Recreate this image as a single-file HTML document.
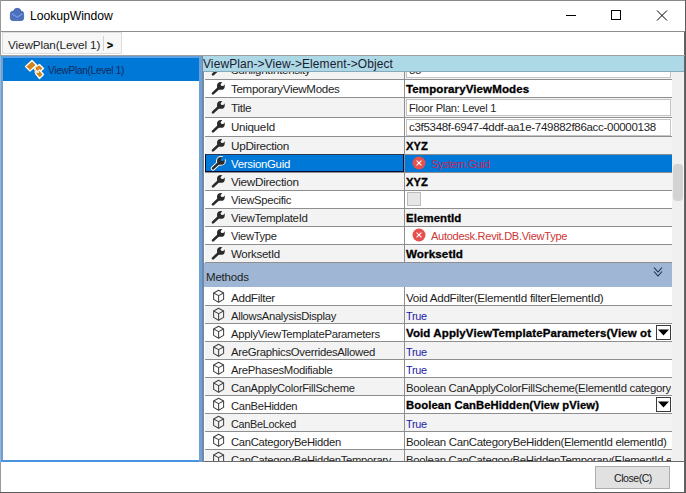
<!DOCTYPE html><html><head><meta charset="utf-8"><title>LookupWindow</title><style>
*{box-sizing:border-box}
html,body{margin:0;padding:0;width:686px;height:493px;overflow:hidden;background:#fff;font-family:"Liberation Sans", sans-serif}
.a{position:absolute}
.t{position:absolute;white-space:nowrap;font-size:11.5px;letter-spacing:-0.3px;color:#1e1e1e;line-height:17px}
.t>span{display:inline-block;transform-origin:0 0}
.b{font-weight:bold;color:#000;font-size:11px;letter-spacing:0.1px;-webkit-text-stroke:0.3px #000}
.ic{position:absolute}
</style></head><body>
<div class="a" style="left:0;top:0;width:686px;height:1px;background:#8a8a8a"></div>
<div class="a" style="left:0;top:0;width:1px;height:493px;background:#9a9a9a"></div>
<div class="a" style="left:685px;top:0;width:1px;height:493px;background:#5a5a5a"></div>
<div class="a" style="left:684px;top:31px;width:1px;height:462px;background:#62666b"></div>
<div class="a" style="left:0;top:492px;width:686px;height:1px;background:#5a5a5a"></div>
<svg class="a" style="left:6px;top:4px" width="22" height="22" viewBox="0 0 22 22"><g fill="#4d70bd" stroke="#3d5ea6" stroke-width="0.8"><circle cx="11.3" cy="8" r="3.7"/><rect x="4.4" y="7.2" width="13.2" height="9.4" rx="2.6"/></g><circle cx="11.3" cy="8" r="3.2" fill="#4d70bd"/><path d="M6 9.6 L11.3 13.2 L16.6 9.6" stroke="#6f98e4" stroke-width="1.3" fill="none"/></svg>
<div class="t " style="left:30px;top:8px;font-size:12.2px;letter-spacing:-0.05px;color:#000"><span>LookupWindow</span></div>
<div class="a" style="left:566px;top:15px;width:10px;height:1px;background:#000"></div>
<div class="a" style="left:611px;top:10px;width:10px;height:10px;border:1px solid #000"></div>
<svg class="a" style="left:656px;top:10px" width="12" height="11" viewBox="0 0 12 11"><path d="M1 0.5 L11 10.5 M11 0.5 L1 10.5" stroke="#000" stroke-width="1"/></svg>
<div class="a" style="left:1px;top:31px;width:684px;height:1px;background:#8e8e8e"></div>
<div class="a" style="left:2px;top:32px;width:120px;height:22px;background:#f7f7f7;border:1px solid #dedede"></div>
<div class="t " style="left:8px;top:36px;font-size:11.7px;letter-spacing:-0.1px"><span>ViewPlan(Level 1)</span></div>
<div class="a" style="left:103px;top:36px;width:1px;height:15px;background:#d0d0d0"></div>
<div class="t b" style="left:107px;top:37px;font-size:10.5px;letter-spacing:0"><span>&gt;</span></div>
<div class="a" style="left:1px;top:55px;width:684px;height:1px;background:#a0a0a0"></div>
<div class="a" style="left:0px;top:56px;width:1px;height:406px;background:#88bbe0"></div>
<div class="a" style="left:1px;top:56px;width:2px;height:406px;background:#789dcb"></div>
<div class="a" style="left:1px;top:56px;width:198px;height:2px;background:#5ea0e2"></div>
<div class="a" style="left:1px;top:460px;width:203px;height:2px;background:#4a93de"></div>
<div class="a" style="left:3px;top:58px;width:196px;height:23px;background:#0078d7"></div>
<svg class="a" style="left:23px;top:58px" width="22" height="22" viewBox="0 0 22 22"><g stroke="#fff" stroke-width="1.3" fill="#d4841c" stroke-linejoin="round"><path d="M2.5 8.5 L9 2.5 L13.5 7 L7 13 Z"/><path d="M10.5 10 L16.5 6.5 L20.5 10.5 L15.5 15 Z"/><path d="M12.5 15.5 L16.5 12 L20.5 16.5 L16.5 20.5 Z"/></g><path d="M12.3 10 L12.3 14.3 L16 14.3" stroke="#f8e2b8" stroke-width="1.4" fill="none"/></svg>
<div class="t " style="left:48px;top:62px;font-size:10px;letter-spacing:-0.25px;color:#15295a"><span>ViewPlan(Level 1)</span></div>
<div class="a" style="left:199px;top:56px;width:3px;height:406px;background:#6fa0d2"></div>
<div class="a" style="left:202px;top:56px;width:2px;height:406px;background:#7089a8"></div>
<div class="a" style="left:0;top:0;width:686px;height:461px;overflow:hidden"><div class="a" style="left:204px;top:71px;width:1px;height:192px;background:#fff"></div><div class="a" style="left:204px;top:287px;width:1px;height:175px;background:#fff"></div><div class="a" style="left:205px;top:60px;width:467px;height:19px;background:#f3f3f3"></div><div class="a" style="left:205px;top:79px;width:467px;height:1px;background:#8e8e8e"></div><div class="a" style="left:210px;top:61px;width:16px;height:16px"><svg class="ic" width="16" height="16" viewBox="0 0 16 16"><path d="M3.0 13.4 L9.0 7.8" stroke="#2a2a2a" stroke-width="2.6" stroke-linecap="round"/><circle cx="10.9" cy="5.9" r="3.9" fill="#2a2a2a"/><circle cx="12.3" cy="4.5" r="1.6" fill="#f3f3f3"/><path d="M12.3 2.9 L16 2.9 L16 6.1 L12.3 6.1 Z" transform="rotate(-45 12.3 4.5)" fill="#f3f3f3"/></svg></div><div class="t " style="left:231px;top:62px;color:#1e1e1e"><span>SunlightIntensity</span></div><div class="a" style="left:406px;top:61px;width:265px;height:17px;background:#fff;border:1px solid #c4c4c4"></div><div class="t " style="left:409px;top:62px;"><span>85</span></div><div class="a" style="left:205px;top:80px;width:467px;height:17px;background:#ffffff"></div><div class="a" style="left:205px;top:97px;width:467px;height:1px;background:#8e8e8e"></div><div class="a" style="left:210px;top:80px;width:16px;height:16px"><svg class="ic" width="16" height="16" viewBox="0 0 16 16"><path d="M3.0 13.4 L9.0 7.8" stroke="#2a2a2a" stroke-width="2.6" stroke-linecap="round"/><circle cx="10.9" cy="5.9" r="3.9" fill="#2a2a2a"/><circle cx="12.3" cy="4.5" r="1.6" fill="#ffffff"/><path d="M12.3 2.9 L16 2.9 L16 6.1 L12.3 6.1 Z" transform="rotate(-45 12.3 4.5)" fill="#ffffff"/></svg></div><div class="t " style="left:231px;top:81px;color:#1e1e1e"><span style="transform:scaleX(1.0028)">TemporaryViewModes</span></div><div class="t b" style="left:406px;top:81px;"><span style="transform:scaleX(1.0483)">TemporaryViewModes</span></div><div class="a" style="left:205px;top:98px;width:467px;height:19px;background:#f3f3f3"></div><div class="a" style="left:205px;top:117px;width:467px;height:1px;background:#8e8e8e"></div><div class="a" style="left:210px;top:99px;width:16px;height:16px"><svg class="ic" width="16" height="16" viewBox="0 0 16 16"><path d="M3.0 13.4 L9.0 7.8" stroke="#2a2a2a" stroke-width="2.6" stroke-linecap="round"/><circle cx="10.9" cy="5.9" r="3.9" fill="#2a2a2a"/><circle cx="12.3" cy="4.5" r="1.6" fill="#f3f3f3"/><path d="M12.3 2.9 L16 2.9 L16 6.1 L12.3 6.1 Z" transform="rotate(-45 12.3 4.5)" fill="#f3f3f3"/></svg></div><div class="t " style="left:231px;top:100px;color:#1e1e1e"><span style="transform:scaleX(1.0211)">Title</span></div><div class="a" style="left:406px;top:99px;width:265px;height:17px;background:#fff;border:1px solid #c4c4c4"></div><div class="t " style="left:409px;top:100px;"><span style="transform:scaleX(0.9659)">Floor Plan: Level 1</span></div><div class="a" style="left:205px;top:118px;width:467px;height:18px;background:#ffffff"></div><div class="a" style="left:205px;top:136px;width:467px;height:1px;background:#8e8e8e"></div><div class="a" style="left:210px;top:118px;width:16px;height:16px"><svg class="ic" width="16" height="16" viewBox="0 0 16 16"><path d="M3.0 13.4 L9.0 7.8" stroke="#2a2a2a" stroke-width="2.6" stroke-linecap="round"/><circle cx="10.9" cy="5.9" r="3.9" fill="#2a2a2a"/><circle cx="12.3" cy="4.5" r="1.6" fill="#ffffff"/><path d="M12.3 2.9 L16 2.9 L16 6.1 L12.3 6.1 Z" transform="rotate(-45 12.3 4.5)" fill="#ffffff"/></svg></div><div class="t " style="left:231px;top:119px;color:#1e1e1e"><span style="transform:scaleX(1.0071)">UniqueId</span></div><div class="a" style="left:406px;top:119px;width:265px;height:17px;background:#fff;border:1px solid #c4c4c4"></div><div class="t " style="left:409px;top:119px;"><span style="transform:scaleX(1.0004)">c3f5348f-6947-4ddf-aa1e-749882f86acc-00000138</span></div><div class="a" style="left:205px;top:137px;width:467px;height:17px;background:#f3f3f3"></div><div class="a" style="left:205px;top:154px;width:467px;height:1px;background:#8e8e8e"></div><div class="a" style="left:210px;top:137px;width:16px;height:16px"><svg class="ic" width="16" height="16" viewBox="0 0 16 16"><path d="M3.0 13.4 L9.0 7.8" stroke="#2a2a2a" stroke-width="2.6" stroke-linecap="round"/><circle cx="10.9" cy="5.9" r="3.9" fill="#2a2a2a"/><circle cx="12.3" cy="4.5" r="1.6" fill="#f3f3f3"/><path d="M12.3 2.9 L16 2.9 L16 6.1 L12.3 6.1 Z" transform="rotate(-45 12.3 4.5)" fill="#f3f3f3"/></svg></div><div class="t " style="left:231px;top:138px;color:#1e1e1e"><span style="transform:scaleX(1.0218)">UpDirection</span></div><div class="t b" style="left:406px;top:138px;"><span style="transform:scaleX(1.0143)">XYZ</span></div><div class="a" style="left:205px;top:155px;width:467px;height:17px;background:#0078d7"></div><div class="a" style="left:205px;top:172px;width:467px;height:1px;background:#8e8e8e"></div><div class="a" style="left:210px;top:155px;width:16px;height:16px"><svg class="ic" width="16" height="16" viewBox="0 0 16 16"><path d="M3.0 13.4 L9.0 7.8" stroke="#fff" stroke-width="4.4" stroke-linecap="round"/><circle cx="10.9" cy="5.9" r="4.9" fill="#fff"/><path d="M3.0 13.4 L9.0 7.8" stroke="#2a2a2a" stroke-width="2.6" stroke-linecap="round"/><circle cx="10.9" cy="5.9" r="3.9" fill="#2a2a2a"/><circle cx="12.3" cy="4.5" r="1.6" fill="#0078d7"/><path d="M12.3 2.9 L16 2.9 L16 6.1 L12.3 6.1 Z" transform="rotate(-45 12.3 4.5)" fill="#0078d7"/></svg></div><div class="t " style="left:231px;top:156px;color:#fff"><span style="transform:scaleX(0.9931)">VersionGuid</span></div><svg width="14" height="14" viewBox="0 0 14 14" style="position:absolute;left:412px;top:156px"><circle cx="7" cy="7" r="6.5" fill="#e8504f"/><path d="M4.6 4.6 L9.4 9.4 M9.4 4.6 L4.6 9.4" stroke="#fff" stroke-width="1.1"/></svg><div class="t " style="left:431px;top:156px;color:#c0285c"><span style="transform:scaleX(0.9387)">System.Guid</span></div><div class="a" style="left:205px;top:173px;width:467px;height:17px;background:#f3f3f3"></div><div class="a" style="left:205px;top:190px;width:467px;height:1px;background:#8e8e8e"></div><div class="a" style="left:210px;top:173px;width:16px;height:16px"><svg class="ic" width="16" height="16" viewBox="0 0 16 16"><path d="M3.0 13.4 L9.0 7.8" stroke="#2a2a2a" stroke-width="2.6" stroke-linecap="round"/><circle cx="10.9" cy="5.9" r="3.9" fill="#2a2a2a"/><circle cx="12.3" cy="4.5" r="1.6" fill="#f3f3f3"/><path d="M12.3 2.9 L16 2.9 L16 6.1 L12.3 6.1 Z" transform="rotate(-45 12.3 4.5)" fill="#f3f3f3"/></svg></div><div class="t " style="left:231px;top:174px;color:#1e1e1e"><span style="transform:scaleX(1.0215)">ViewDirection</span></div><div class="t b" style="left:406px;top:174px;"><span style="transform:scaleX(1.0143)">XYZ</span></div><div class="a" style="left:205px;top:191px;width:467px;height:17px;background:#ffffff"></div><div class="a" style="left:205px;top:208px;width:467px;height:1px;background:#8e8e8e"></div><div class="a" style="left:210px;top:191px;width:16px;height:16px"><svg class="ic" width="16" height="16" viewBox="0 0 16 16"><path d="M3.0 13.4 L9.0 7.8" stroke="#2a2a2a" stroke-width="2.6" stroke-linecap="round"/><circle cx="10.9" cy="5.9" r="3.9" fill="#2a2a2a"/><circle cx="12.3" cy="4.5" r="1.6" fill="#ffffff"/><path d="M12.3 2.9 L16 2.9 L16 6.1 L12.3 6.1 Z" transform="rotate(-45 12.3 4.5)" fill="#ffffff"/></svg></div><div class="t " style="left:231px;top:192px;color:#1e1e1e"><span style="transform:scaleX(0.9803)">ViewSpecific</span></div><div class="a" style="left:407px;top:192px;width:14px;height:14px;background:#e6e6e6;border:1px solid #bcbcbc"></div><div class="a" style="left:205px;top:209px;width:467px;height:17px;background:#f3f3f3"></div><div class="a" style="left:205px;top:226px;width:467px;height:1px;background:#8e8e8e"></div><div class="a" style="left:210px;top:209px;width:16px;height:16px"><svg class="ic" width="16" height="16" viewBox="0 0 16 16"><path d="M3.0 13.4 L9.0 7.8" stroke="#2a2a2a" stroke-width="2.6" stroke-linecap="round"/><circle cx="10.9" cy="5.9" r="3.9" fill="#2a2a2a"/><circle cx="12.3" cy="4.5" r="1.6" fill="#f3f3f3"/><path d="M12.3 2.9 L16 2.9 L16 6.1 L12.3 6.1 Z" transform="rotate(-45 12.3 4.5)" fill="#f3f3f3"/></svg></div><div class="t " style="left:231px;top:210px;color:#1e1e1e"><span style="transform:scaleX(0.9987)">ViewTemplateId</span></div><div class="t b" style="left:406px;top:210px;"><span style="transform:scaleX(1.0365)">ElementId</span></div><div class="a" style="left:205px;top:227px;width:467px;height:17px;background:#ffffff"></div><div class="a" style="left:205px;top:244px;width:467px;height:1px;background:#8e8e8e"></div><div class="a" style="left:210px;top:227px;width:16px;height:16px"><svg class="ic" width="16" height="16" viewBox="0 0 16 16"><path d="M3.0 13.4 L9.0 7.8" stroke="#2a2a2a" stroke-width="2.6" stroke-linecap="round"/><circle cx="10.9" cy="5.9" r="3.9" fill="#2a2a2a"/><circle cx="12.3" cy="4.5" r="1.6" fill="#ffffff"/><path d="M12.3 2.9 L16 2.9 L16 6.1 L12.3 6.1 Z" transform="rotate(-45 12.3 4.5)" fill="#ffffff"/></svg></div><div class="t " style="left:231px;top:228px;color:#1e1e1e"><span style="transform:scaleX(0.9660)">ViewType</span></div><svg width="14" height="14" viewBox="0 0 14 14" style="position:absolute;left:412px;top:228px"><circle cx="7" cy="7" r="6.5" fill="#e8504f"/><path d="M4.6 4.6 L9.4 9.4 M9.4 4.6 L4.6 9.4" stroke="#fff" stroke-width="1.1"/></svg><div class="t " style="left:431px;top:228px;color:#cc3636"><span style="transform:scaleX(0.9617)">Autodesk.Revit.DB.ViewType</span></div><div class="a" style="left:205px;top:245px;width:467px;height:17px;background:#f3f3f3"></div><div class="a" style="left:205px;top:262px;width:467px;height:1px;background:#8e8e8e"></div><div class="a" style="left:210px;top:245px;width:16px;height:16px"><svg class="ic" width="16" height="16" viewBox="0 0 16 16"><path d="M3.0 13.4 L9.0 7.8" stroke="#2a2a2a" stroke-width="2.6" stroke-linecap="round"/><circle cx="10.9" cy="5.9" r="3.9" fill="#2a2a2a"/><circle cx="12.3" cy="4.5" r="1.6" fill="#f3f3f3"/><path d="M12.3 2.9 L16 2.9 L16 6.1 L12.3 6.1 Z" transform="rotate(-45 12.3 4.5)" fill="#f3f3f3"/></svg></div><div class="t " style="left:231px;top:246px;color:#1e1e1e"><span style="transform:scaleX(1.0021)">WorksetId</span></div><div class="t b" style="left:406px;top:246px;"><span style="transform:scaleX(1.0566)">WorksetId</span></div><div class="a" style="left:205px;top:154px;width:199px;height:18px;border:1px solid #0a0a30;border-top-color:#2a3550"></div><div class="a" style="left:204px;top:263px;width:468px;height:24px;background:#9fb7d5"></div><div class="t " style="left:206px;top:269px;letter-spacing:-0.2px"><span>Methods</span></div><svg class="a" style="left:652px;top:266px" width="12" height="12" viewBox="0 0 12 12" fill="none" stroke="#1e2a40" stroke-width="1.1"><path d="M2 1.5 L6 6 L10 1.5 M2 5.5 L6 10 L10 5.5"/></svg><div class="a" style="left:205px;top:287px;width:467px;height:18px;background:#ffffff"></div><div class="a" style="left:205px;top:305px;width:467px;height:1px;background:#8e8e8e"></div><div class="a" style="left:210px;top:289px;width:16px;height:16px"><svg class="ic" width="16" height="16" viewBox="0 0 16 16" fill="none" stroke="#454545" stroke-width="1.05" stroke-linejoin="round"><path d="M8.6 1.3 L13.6 4 L13.6 10.4 L8.6 13.3 L3.6 10.4 L3.6 4 Z"/><path d="M3.6 4 L8.6 6.6 L13.6 4 M8.6 6.6 L8.6 13.3"/></svg></div><div class="t " style="left:231px;top:290px;"><span style="transform:scaleX(1.0140)">AddFilter</span></div><div class="t " style="left:406px;top:290px;width:265px;overflow:hidden"><span style="transform:scaleX(1.0134)">Void AddFilter(ElementId filterElementId)</span></div><div class="a" style="left:205px;top:306px;width:467px;height:17px;background:#f3f3f3"></div><div class="a" style="left:205px;top:323px;width:467px;height:1px;background:#8e8e8e"></div><div class="a" style="left:210px;top:307px;width:16px;height:16px"><svg class="ic" width="16" height="16" viewBox="0 0 16 16" fill="none" stroke="#454545" stroke-width="1.05" stroke-linejoin="round"><path d="M8.6 1.3 L13.6 4 L13.6 10.4 L8.6 13.3 L3.6 10.4 L3.6 4 Z"/><path d="M3.6 4 L8.6 6.6 L13.6 4 M8.6 6.6 L8.6 13.3"/></svg></div><div class="t " style="left:231px;top:308px;"><span style="transform:scaleX(0.9776)">AllowsAnalysisDisplay</span></div><div class="t " style="left:406px;top:308px;color:#1a1aa8"><span style="transform:scaleX(0.9429)">True</span></div><div class="a" style="left:205px;top:324px;width:467px;height:17px;background:#ffffff"></div><div class="a" style="left:205px;top:341px;width:467px;height:1px;background:#8e8e8e"></div><div class="a" style="left:210px;top:325px;width:16px;height:16px"><svg class="ic" width="16" height="16" viewBox="0 0 16 16" fill="none" stroke="#454545" stroke-width="1.05" stroke-linejoin="round"><path d="M8.6 1.3 L13.6 4 L13.6 10.4 L8.6 13.3 L3.6 10.4 L3.6 4 Z"/><path d="M3.6 4 L8.6 6.6 L13.6 4 M8.6 6.6 L8.6 13.3"/></svg></div><div class="t " style="left:231px;top:326px;"><span style="transform:scaleX(0.9828)">ApplyViewTemplateParameters</span></div><div class="t b" style="left:406px;top:325px;width:248px;overflow:hidden"><span style="transform:scaleX(1.0453)">Void ApplyViewTemplateParameters(View ot</span></div><div style="position:absolute;left:656px;top:325px;width:15px;height:15px;border:1px solid #3a3a3a;background:#fff"><svg width="13" height="13" viewBox="0 0 13 13" style="position:absolute;left:0;top:0"><path d="M1 3.6 L12 3.6 L6.5 9.6 Z" fill="#000"/></svg></div><div class="a" style="left:205px;top:342px;width:467px;height:17px;background:#f3f3f3"></div><div class="a" style="left:205px;top:359px;width:467px;height:1px;background:#8e8e8e"></div><div class="a" style="left:210px;top:343px;width:16px;height:16px"><svg class="ic" width="16" height="16" viewBox="0 0 16 16" fill="none" stroke="#454545" stroke-width="1.05" stroke-linejoin="round"><path d="M8.6 1.3 L13.6 4 L13.6 10.4 L8.6 13.3 L3.6 10.4 L3.6 4 Z"/><path d="M3.6 4 L8.6 6.6 L13.6 4 M8.6 6.6 L8.6 13.3"/></svg></div><div class="t " style="left:231px;top:344px;"><span style="transform:scaleX(0.9869)">AreGraphicsOverridesAllowed</span></div><div class="t " style="left:406px;top:344px;color:#1a1aa8"><span style="transform:scaleX(0.9429)">True</span></div><div class="a" style="left:205px;top:360px;width:467px;height:17px;background:#ffffff"></div><div class="a" style="left:205px;top:377px;width:467px;height:1px;background:#8e8e8e"></div><div class="a" style="left:210px;top:361px;width:16px;height:16px"><svg class="ic" width="16" height="16" viewBox="0 0 16 16" fill="none" stroke="#454545" stroke-width="1.05" stroke-linejoin="round"><path d="M8.6 1.3 L13.6 4 L13.6 10.4 L8.6 13.3 L3.6 10.4 L3.6 4 Z"/><path d="M3.6 4 L8.6 6.6 L13.6 4 M8.6 6.6 L8.6 13.3"/></svg></div><div class="t " style="left:231px;top:362px;"><span style="transform:scaleX(0.9863)">ArePhasesModifiable</span></div><div class="t " style="left:406px;top:362px;color:#1a1aa8"><span style="transform:scaleX(0.9429)">True</span></div><div class="a" style="left:205px;top:378px;width:467px;height:17px;background:#f3f3f3"></div><div class="a" style="left:205px;top:395px;width:467px;height:1px;background:#8e8e8e"></div><div class="a" style="left:210px;top:379px;width:16px;height:16px"><svg class="ic" width="16" height="16" viewBox="0 0 16 16" fill="none" stroke="#454545" stroke-width="1.05" stroke-linejoin="round"><path d="M8.6 1.3 L13.6 4 L13.6 10.4 L8.6 13.3 L3.6 10.4 L3.6 4 Z"/><path d="M3.6 4 L8.6 6.6 L13.6 4 M8.6 6.6 L8.6 13.3"/></svg></div><div class="t " style="left:231px;top:380px;"><span style="transform:scaleX(0.9709)">CanApplyColorFillScheme</span></div><div class="t " style="left:406px;top:380px;width:265px;overflow:hidden"><span style="transform:scaleX(0.9900)">Boolean CanApplyColorFillScheme(ElementId category</span></div><div class="a" style="left:205px;top:396px;width:467px;height:17px;background:#ffffff"></div><div class="a" style="left:205px;top:413px;width:467px;height:1px;background:#8e8e8e"></div><div class="a" style="left:210px;top:397px;width:16px;height:16px"><svg class="ic" width="16" height="16" viewBox="0 0 16 16" fill="none" stroke="#454545" stroke-width="1.05" stroke-linejoin="round"><path d="M8.6 1.3 L13.6 4 L13.6 10.4 L8.6 13.3 L3.6 10.4 L3.6 4 Z"/><path d="M3.6 4 L8.6 6.6 L13.6 4 M8.6 6.6 L8.6 13.3"/></svg></div><div class="t " style="left:231px;top:398px;"><span style="transform:scaleX(0.9701)">CanBeHidden</span></div><div class="t b" style="left:406px;top:397px;width:248px;overflow:hidden"><span style="transform:scaleX(1.0241)">Boolean CanBeHidden(View pView)</span></div><div style="position:absolute;left:656px;top:397px;width:15px;height:15px;border:1px solid #3a3a3a;background:#fff"><svg width="13" height="13" viewBox="0 0 13 13" style="position:absolute;left:0;top:0"><path d="M1 3.6 L12 3.6 L6.5 9.6 Z" fill="#000"/></svg></div><div class="a" style="left:205px;top:414px;width:467px;height:17px;background:#f3f3f3"></div><div class="a" style="left:205px;top:431px;width:467px;height:1px;background:#8e8e8e"></div><div class="a" style="left:210px;top:415px;width:16px;height:16px"><svg class="ic" width="16" height="16" viewBox="0 0 16 16" fill="none" stroke="#454545" stroke-width="1.05" stroke-linejoin="round"><path d="M8.6 1.3 L13.6 4 L13.6 10.4 L8.6 13.3 L3.6 10.4 L3.6 4 Z"/><path d="M3.6 4 L8.6 6.6 L13.6 4 M8.6 6.6 L8.6 13.3"/></svg></div><div class="t " style="left:231px;top:416px;"><span style="transform:scaleX(0.9426)">CanBeLocked</span></div><div class="t " style="left:406px;top:416px;color:#1a1aa8"><span style="transform:scaleX(0.9429)">True</span></div><div class="a" style="left:205px;top:432px;width:467px;height:17px;background:#ffffff"></div><div class="a" style="left:205px;top:449px;width:467px;height:1px;background:#8e8e8e"></div><div class="a" style="left:210px;top:433px;width:16px;height:16px"><svg class="ic" width="16" height="16" viewBox="0 0 16 16" fill="none" stroke="#454545" stroke-width="1.05" stroke-linejoin="round"><path d="M8.6 1.3 L13.6 4 L13.6 10.4 L8.6 13.3 L3.6 10.4 L3.6 4 Z"/><path d="M3.6 4 L8.6 6.6 L13.6 4 M8.6 6.6 L8.6 13.3"/></svg></div><div class="t " style="left:231px;top:434px;"><span style="transform:scaleX(0.9759)">CanCategoryBeHidden</span></div><div class="t " style="left:406px;top:434px;width:265px;overflow:hidden"><span style="transform:scaleX(0.9927)">Boolean CanCategoryBeHidden(ElementId elementId)</span></div><div class="a" style="left:205px;top:450px;width:467px;height:17px;background:#f3f3f3"></div><div class="a" style="left:205px;top:467px;width:467px;height:1px;background:#8e8e8e"></div><div class="a" style="left:210px;top:451px;width:16px;height:16px"><svg class="ic" width="16" height="16" viewBox="0 0 16 16" fill="none" stroke="#454545" stroke-width="1.05" stroke-linejoin="round"><path d="M8.6 1.3 L13.6 4 L13.6 10.4 L8.6 13.3 L3.6 10.4 L3.6 4 Z"/><path d="M3.6 4 L8.6 6.6 L13.6 4 M8.6 6.6 L8.6 13.3"/></svg></div><div class="t " style="left:231px;top:452px;"><span style="transform:scaleX(0.9750)">CanCategoryBeHiddenTemporary</span></div><div class="t " style="left:406px;top:452px;width:265px;overflow:hidden"><span style="transform:scaleX(0.9900)">Boolean CanCategoryBeHiddenTemporary(ElementId e</span></div><div class="a" style="left:404px;top:71px;width:1px;height:192px;background:#8e8e8e"></div><div class="a" style="left:404px;top:287px;width:1px;height:175px;background:#8e8e8e"></div></div>
<div class="a" style="left:203px;top:56px;width:481px;height:16px;background:#add8e6;border-bottom:1px solid #86aabb"></div>
<div class="t " style="left:203px;top:56px;font-size:12px;letter-spacing:0.1px;color:#1a2030;line-height:16px"><span style="transform:scaleX(0.9979)">ViewPlan-&gt;View-&gt;Element-&gt;Object</span></div>
<div class="a" style="left:672px;top:72px;width:12px;height:389px;background:#f0f0f0;border-right:1px solid #f3f6f9"></div>
<div class="a" style="left:673px;top:164px;width:10px;height:37px;background:#d3d3d3;border-radius:4px"></div>
<div class="a" style="left:204px;top:461px;width:481px;height:1px;background:#6a6a6a"></div>
<div class="a" style="left:595px;top:466px;width:75px;height:23px;background:#e1e1e1;border:1px solid #adadad"></div>
<div class="t " style="left:595px;top:470px;width:75px;text-align:center;font-size:10.5px;letter-spacing:-0.45px;color:#1a1a1a;padding-left:1px"><span>Close(C)</span></div>
</body></html>
